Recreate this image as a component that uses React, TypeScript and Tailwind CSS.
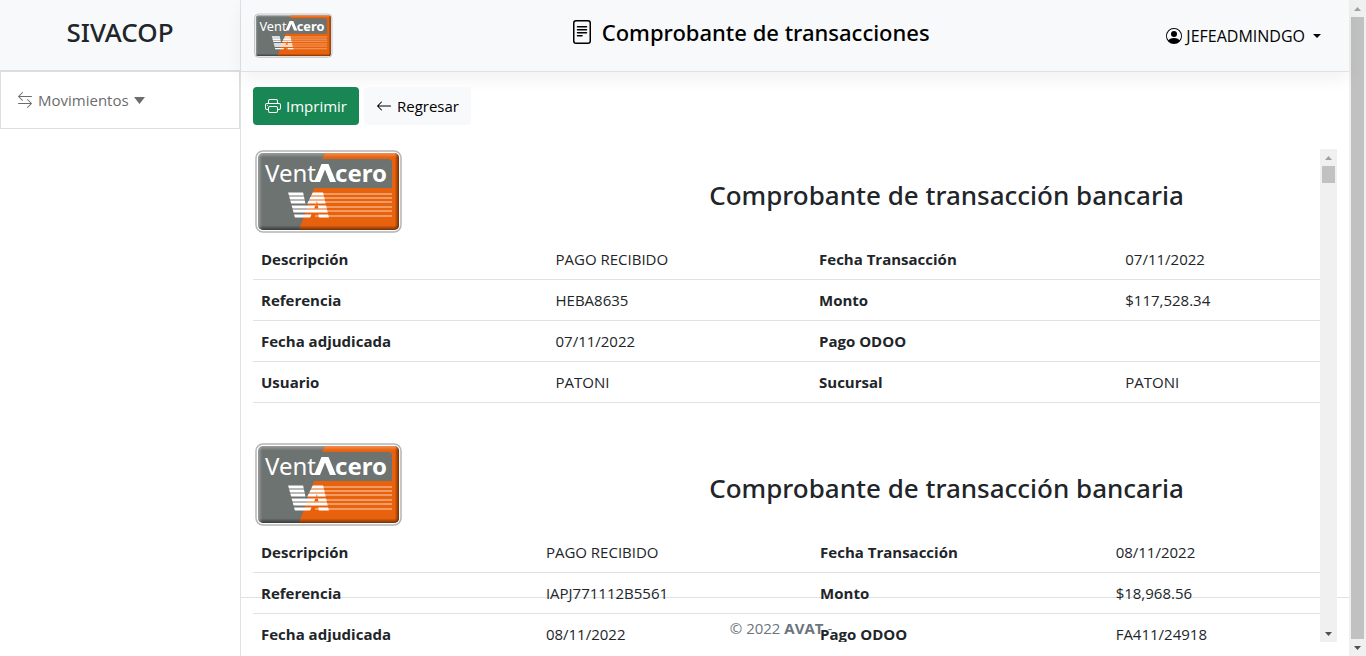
import { useId } from "react";
import { BsArrowLeft, BsArrowLeftRight, BsFileText, BsPersonCircle, BsPrinter } from "react-icons/bs";

type Row = [string, string, string, string];

interface Voucher {
  columns: string[];
  rows: Row[];
}

const vouchers: Voucher[] = [
  {
    columns: ["w-[27.6%]", "w-[24.7%]", "w-[28.7%]", "w-[19%]"],
    rows: [
      ["Descripción", "PAGO RECIBIDO", "Fecha Transacción", "07/11/2022"],
      ["Referencia", "HEBA8635", "Monto", "$117,528.34"],
      ["Fecha adjudicada", "07/11/2022", "Pago ODOO", ""],
      ["Usuario", "PATONI", "Sucursal", "PATONI"],
    ],
  },
  {
    columns: ["w-[26.7%]", "w-[25.7%]", "w-[27.7%]", "w-[19.9%]"],
    rows: [
      ["Descripción", "PAGO RECIBIDO", "Fecha Transacción", "08/11/2022"],
      ["Referencia", "IAPJ771112B5561", "Monto", "$18,968.56"],
      ["Fecha adjudicada", "08/11/2022", "Pago ODOO", "FA411/24918"],
    ],
  },
];

const stripes = [45, 49, 53, 58, 62, 67];

function Logo({ className }: { className: string }) {
  const id = useId();
  return (
    <svg className={className} viewBox="0 0 150 86" role="img" aria-label="VentAcero">
      <defs>
        <linearGradient id={`${id}v`} x1="0" y1="0" x2="0" y2="1">
          <stop offset="0" stopColor="#fff" stopOpacity="0.3" />
          <stop offset="0.06" stopColor="#fff" stopOpacity="0" />
          <stop offset="0.94" stopColor="#000" stopOpacity="0" />
          <stop offset="1" stopColor="#000" stopOpacity="0.5" />
        </linearGradient>
        <linearGradient id={`${id}h`} x1="0" y1="0" x2="1" y2="0">
          <stop offset="0" stopColor="#fff" stopOpacity="0.3" />
          <stop offset="0.03" stopColor="#fff" stopOpacity="0" />
          <stop offset="0.97" stopColor="#000" stopOpacity="0" />
          <stop offset="1" stopColor="#000" stopOpacity="0.5" />
        </linearGradient>
        <clipPath id={`${id}c`}>
          <rect x="5" y="4" width="141" height="77" rx="5" />
        </clipPath>
        <clipPath id={`${id}l`}>
          {stripes.map((y) => (
            <rect key={y} x="30" y={y - 1.5} width="60" height="3" />
          ))}
        </clipPath>
      </defs>
      <rect x="3" y="2" width="145" height="81" rx="7" fill="#fff" stroke="#b4b4b4" strokeWidth="1.5" />
      <g clipPath={`url(#${id}c)`}>
        <rect x="5" y="4" width="141" height="77" fill="#6d7371" />
        <path d="M72 4H146V81H46L61 39H139V14Q139 10 135 10H69Z" fill="#e8610d" />
        <rect x="5" y="4" width="141" height="77" fill={`url(#${id}v)`} />
        <rect x="5" y="4" width="141" height="77" fill={`url(#${id}h)`} />
      </g>
      <text x="12" y="33" fontFamily="'Noto Sans', sans-serif" fontSize="24" fill="#fff">
        Vent
      </text>
      <path d="M61 33L68.500 15H75.500L83 33H77L72 20.500L67 33Z" fill="#fff" />
      <text x="82" y="33" fontFamily="'Noto Sans', sans-serif" fontSize="24" fontWeight="700" fill="#fff">
        cero
      </text>
      {stripes.map((y) => (
        <path key={y} d={`M62 ${y}H139`} stroke="#ffe3cd" strokeWidth="0.9" />
      ))}
      <g clipPath={`url(#${id}l)`} fill="#fff">
        <path d="M35 43H50L53 57L60 43H70L76 69H66L65 64H59L57 69H42Z" />
        <path d="M64 52L61 60H65.500Z" fill="#e8610d" />
      </g>
    </svg>
  );
}

function Caret({ className, up = false }: { className: string; up?: boolean }) {
  return (
    <svg className={className} viewBox="0 0 10 6" preserveAspectRatio="none" fill="currentColor" aria-hidden="true">
      <path d={up ? "M0 6L5 0L10 6Z" : "M0 0H10L5 6Z"} />
    </svg>
  );
}

function Scrollbar({ thumb }: { thumb: string }) {
  return (
    <div className="flex w-[17px] shrink-0 flex-col bg-[#f0f0f0] px-0.5" aria-hidden="true">
      <span className="flex h-[17px] shrink-0 items-center justify-center text-[#a0a0a0]">
        <Caret up className="h-1 w-[7px]" />
      </span>
      <span className="flex min-h-0 flex-1 flex-col">
        <span className={`${thumb} bg-[#c1c1c1]`} />
      </span>
      <span className="flex h-[17px] shrink-0 items-center justify-center text-[#505050]">
        <Caret className="h-1 w-[7px]" />
      </span>
    </div>
  );
}

function VoucherCard({ columns, rows }: Voucher) {
  return (
    <article className="mb-[39px]">
      <div className="flex h-[90px]">
        <div className="w-[30%]">
          <Logo className="w-[150px]" />
        </div>
        <h2 className="flex flex-1 items-center justify-center pt-0.5 font-['Noto_Sans',sans-serif] text-[26px] font-medium">
          Comprobante de transacción bancaria
        </h2>
      </div>
      <table className="w-full table-fixed text-left">
        <colgroup>
          {columns.map((width, i) => (
            <col key={i} className={width} />
          ))}
        </colgroup>
        <tbody>
          {rows.map((row) => (
            <tr key={row[0]} className="border-b border-[#dee2e6]">
              {row.map((cell, i) =>
                i % 2 === 0 ? (
                  <th key={i} scope="row" className="p-2 font-bold">
                    {cell}
                  </th>
                ) : (
                  <td key={i} className="p-2">
                    {cell}
                  </td>
                ),
              )}
            </tr>
          ))}
        </tbody>
      </table>
    </article>
  );
}

export default function App() {
  return (
    <div className="flex h-screen overflow-hidden bg-white font-['Open_Sans',sans-serif] text-[15px] leading-6 text-[#212529]">
      <aside className="w-60 shrink-0">
        <div className="flex h-[70px] items-center justify-center bg-[#f8f9fa] pb-1.5">
          <h1 className="font-['Noto_Sans',sans-serif] text-[26px] font-medium">SIVACOP</h1>
        </div>
        <nav className="border border-t-2 border-[#dcdfe2]">
          <button type="button" className="flex h-14 w-full items-center gap-[5px] px-4 text-[#6c6c6c]">
            <BsArrowLeftRight className="size-4" />
            Movimientos
            <Caret className="h-[7px] w-[11px]" />
          </button>
        </nav>
      </aside>

      <div className="relative flex min-w-0 flex-1 flex-col border-l border-[#dee2e6]">
        <header className="flex h-[72px] shrink-0 items-center justify-between border-b border-[#dee2e6] bg-[#f8f9fa] pr-7 pl-3 shadow-[0_8px_16px_rgba(0,0,0,0.05)]">
          <Logo className="w-20" />
          <h2 className="flex items-center gap-2 pb-2 font-['Noto_Sans',sans-serif] text-[22px] font-medium text-black">
            <BsFileText className="size-6" />
            Comprobante de transacciones
          </h2>
          <button type="button" className="flex items-center gap-1 text-base text-black">
            <BsPersonCircle className="size-4" />
            JEFEADMINDGO
            <Caret className="ml-1 h-1 w-2" />
          </button>
        </header>

        <main className="flex min-h-0 flex-1 flex-col px-3 pt-[15px] pb-3.5">
          <div className="mb-6 flex gap-[5px]">
            <button type="button" className="flex h-[38px] items-center gap-[5px] rounded bg-[#198754] px-3 text-white">
              <BsPrinter className="size-4" />
              Imprimir
            </button>
            <a href="#" className="flex h-[38px] items-center gap-[5px] rounded bg-[#f8f9fa] px-3 text-black">
              <BsArrowLeft className="size-4" />
              Regresar
            </a>
          </div>
          <div className="relative z-10 flex min-h-0 flex-1">
            <div className="min-w-0 flex-1 overflow-hidden">
              {vouchers.map((voucher, i) => (
                <VoucherCard key={i} {...voucher} />
              ))}
            </div>
            <Scrollbar thumb="h-[17px]" />
          </div>
        </main>

        <footer className="absolute inset-x-0 bottom-0 flex h-[59px] items-center justify-center border-t border-[#dee2e6] pt-0.5 pr-7 text-[#6c757d]">
          <p>
            © 2022 <strong>AVAT</strong> -
          </p>
        </footer>
      </div>
      <Scrollbar thumb="flex-1" />
    </div>
  );
}
